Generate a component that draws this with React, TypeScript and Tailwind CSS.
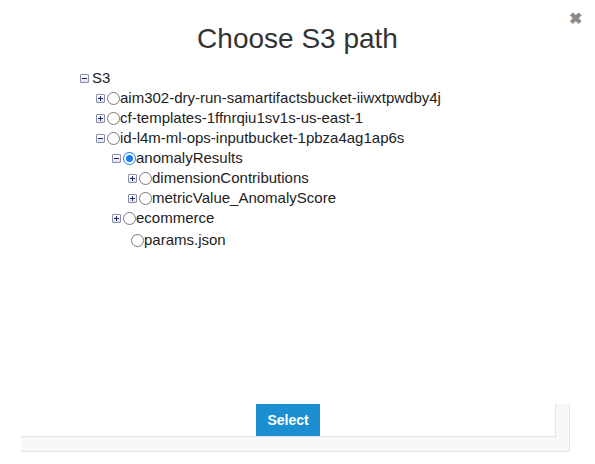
type Node = {
  name: string;
  open?: boolean;
  leaf?: boolean;
  checked?: boolean;
  children?: Node[];
};

const TREE: Node[] = [
  { name: "aim302-dry-run-samartifactsbucket-iiwxtpwdby4j" },
  { name: "cf-templates-1ffnrqiu1sv1s-us-east-1" },
  {
    name: "id-l4m-ml-ops-inputbucket-1pbza4ag1ap6s",
    open: true,
    children: [
      {
        name: "anomalyResults",
        open: true,
        checked: true,
        children: [
          { name: "dimensionContributions" },
          { name: "metricValue_AnomalyScore" },
        ],
      },
      { name: "ecommerce" },
      { name: "params.json", leaf: true },
    ],
  },
];

function Toggle({ open }: { open?: boolean }) {
  return (
    <span className="flex h-[9px] w-[9px] shrink-0 items-center justify-center rounded-[1px] border border-[#8a8cae] bg-gradient-to-b from-white to-[#dfe3ee]">
      <svg width="7" height="7" viewBox="0 0 7 7">
        <rect x="1" y="3" width="5" height="1" fill="#1f2a6b" />
        {!open && <rect x="3" y="1" width="1" height="5" fill="#1f2a6b" />}
      </svg>
    </span>
  );
}

function Radio({ checked }: { checked?: boolean }) {
  return checked ? (
    <span className="flex h-[13px] w-[13px] shrink-0 items-center justify-center rounded-full bg-[#1a7ff0]">
      <span className="block h-[11px] w-[11px] rounded-full border-[2px] border-white bg-[#1a7ff0]" />
    </span>
  ) : (
    <span className="block h-[13px] w-[13px] shrink-0 rounded-full border border-[#7a7a7a] bg-white" />
  );
}

function Branch({ nodes }: { nodes: Node[] }) {
  return (
    <ul className="pl-4">
      {nodes.map((n) => (
        <li key={n.name}>
          {n.leaf ? (
            <div className="mt-[2px] flex h-5 items-center pl-[19px]">
              <Radio />
              <span>{n.name}</span>
            </div>
          ) : (
            <div className="flex h-5 items-center">
              <Toggle open={n.open} />
              <span className="ml-[2px] flex">
                <Radio checked={n.checked} />
              </span>
              <span>{n.name}</span>
            </div>
          )}
          {n.open && n.children && <Branch nodes={n.children} />}
        </li>
      ))}
    </ul>
  );
}

export default function App() {
  return (
    <div className="relative flex h-[464px] w-[595px] flex-col bg-white font-['Liberation_Sans',Arial,sans-serif] text-[#222]">
      <span className="absolute right-[13px] top-[11px] text-[16px] font-bold leading-none text-[#8a8a8a]">
        ✖
      </span>
      <h2 className="pt-[22px] text-center text-[28px] leading-[34px] text-[#333]">
        Choose S3 path
      </h2>

      <div className="flex-1 pl-[80px] pt-[12px] text-[15px]">
        <div className="flex h-5 items-center">
          <Toggle open />
          <span className="ml-[3px]">S3</span>
        </div>
        <Branch nodes={TREE} />
      </div>

      <div className="mb-[12px] ml-[21px] h-[48px] w-[549px] border-b border-r border-[#e4e4e4] bg-[#f8f8f8]">
        <div className="flex h-[33px] w-[535px] justify-center border-b border-r border-[#e4e4e4] bg-white">
          <button className="h-[32px] w-[64px] bg-[#1b8fcf] text-[14px] font-bold text-white">
            Select
          </button>
        </div>
      </div>
    </div>
  );
}
